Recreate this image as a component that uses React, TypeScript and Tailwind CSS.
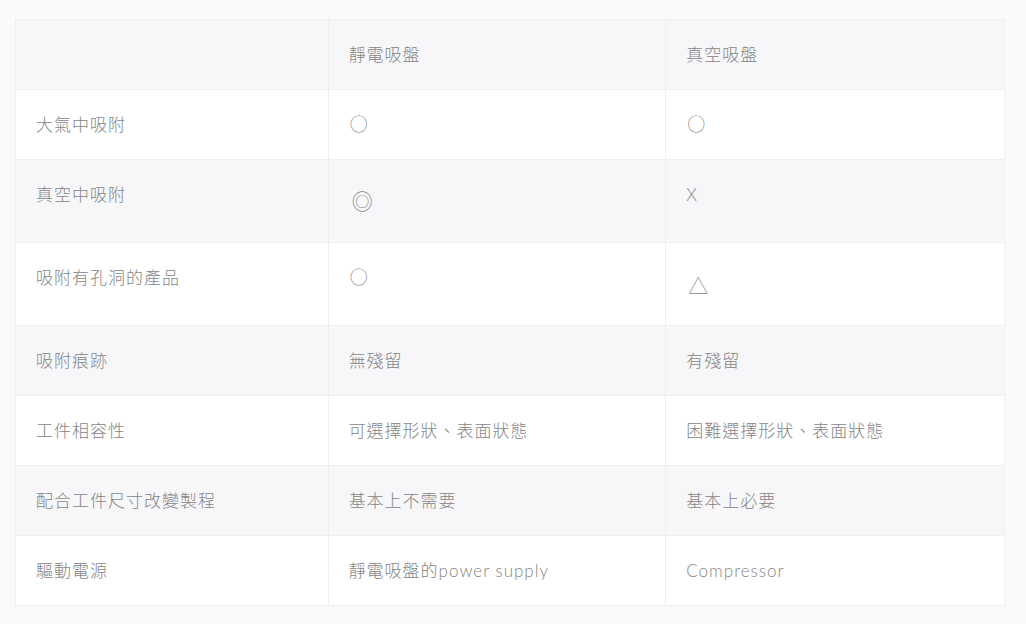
import React from 'react';

type Cell = { text: string; symbol?: 'circle' | 'double' | 'triangle' };

interface Row {
  label: string;
  electro: Cell;
  vacuum: Cell;
  tall?: boolean;
}

const ROWS: Row[] = [
  { label: '大氣中吸附', electro: { text: '○', symbol: 'circle' }, vacuum: { text: '○', symbol: 'circle' } },
  { label: '真空中吸附', electro: { text: '◎', symbol: 'double' }, vacuum: { text: 'X' }, tall: true },
  { label: '吸附有孔洞的產品', electro: { text: '○', symbol: 'circle' }, vacuum: { text: '△', symbol: 'triangle' }, tall: true },
  { label: '吸附痕跡', electro: { text: '無殘留' }, vacuum: { text: '有殘留' } },
  { label: '工件相容性', electro: { text: '可選擇形狀、表面狀態' }, vacuum: { text: '困難選擇形狀、表面狀態' } },
  { label: '配合工件尺寸改變製程', electro: { text: '基本上不需要' }, vacuum: { text: '基本上必要' } },
  { label: '驅動電源', electro: { text: '靜電吸盤的power supply' }, vacuum: { text: 'Compressor' } },
];

const FONT = { fontFamily: '"Lato", "Noto Sans CJK TC", "Noto Sans", sans-serif' };
const SYMBOL_FONT = { fontFamily: '"Noto Sans CJK TC", "DejaVu Sans", sans-serif' };

function CellContent({ cell }: { cell: Cell }) {
  if (cell.symbol === 'circle') {
    return <span className="block text-[18px] leading-[24px] pl-[1px]" style={SYMBOL_FONT}>{cell.text}</span>;
  }
  if (cell.symbol === 'double') {
    return <span className="block pt-[5px] pl-[3px] text-[21px] leading-[28px]" style={SYMBOL_FONT}>{cell.text}</span>;
  }
  if (cell.symbol === 'triangle') {
    return <span className="block pt-[8px] pl-[2px] text-[20px] leading-[28px]" style={SYMBOL_FONT}>{cell.text}</span>;
  }
  return <span className="block">{cell.text}</span>;
}

export default function App() {
  return (
    <div className="min-h-[624px] bg-[#fafafa] pl-[15px] pr-[21px] pt-[19px] pb-[18px]" style={FONT}>
      <table className="w-[990px] border-collapse text-[17px] leading-[28px] tracking-[1px] text-[#858585] font-light">
        <colgroup>
          <col className="w-[313px]" />
          <col className="w-[338px]" />
          <col className="w-[339px]" />
        </colgroup>
        <thead>
          <tr className="h-[70px] bg-[#f7f7f9]">
            <th className="border border-[#efeff1] px-[20px] pt-[21px] align-top text-left font-light" />
            <th className="border border-[#efeff1] px-[20px] pt-[21px] align-top text-left font-light">靜電吸盤</th>
            <th className="border border-[#efeff1] px-[20px] pt-[21px] align-top text-left font-light">真空吸盤</th>
          </tr>
        </thead>
        <tbody>
          {ROWS.map((row, i) => (
            <tr
              key={row.label}
              className={`${row.tall ? 'h-[83px]' : 'h-[70px]'} ${i % 2 === 1 ? 'bg-[#f7f7f9]' : 'bg-white'}`}
            >
              <td className="border border-[#efeff1] px-[20px] pt-[21px] align-top">{row.label}</td>
              <td className="border border-[#efeff1] px-[20px] pt-[21px] align-top">
                <CellContent cell={row.electro} />
              </td>
              <td className="border border-[#efeff1] px-[20px] pt-[21px] align-top">
                <CellContent cell={row.vacuum} />
              </td>
            </tr>
          ))}
        </tbody>
      </table>
    </div>
  );
}
